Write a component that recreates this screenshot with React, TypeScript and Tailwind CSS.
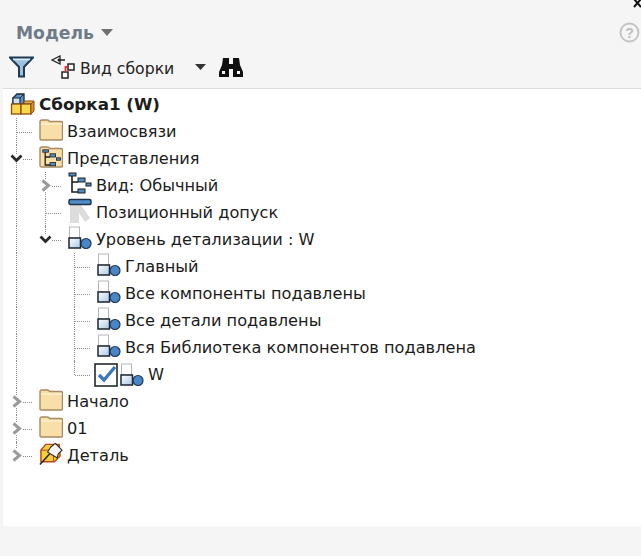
import React from 'react';

const Folder = () => (
  <svg width="24" height="23" viewBox="0 0 24 23" className="shrink-0">
    <path d="M1 4 Q1 2 3 2 H8 Q10 2 10.5 3.5 H22 Q23.5 3.5 23.5 5 V20.5 Q23.5 22 22 22 H2.5 Q1 22 1 20.5 Z" fill="#f8dfa8" stroke="#a78a62" strokeWidth="1.4" />
    <path d="M2 6 H23" stroke="#fff0cc" strokeWidth="1.5" />
  </svg>
);

const TreeGlyph = () => (
  <>
    <path d="M4 4 V20 H10 M4 10 H10" fill="none" stroke="#1c1c1c" strokeWidth="1.6" />
    <rect x="1" y="1" width="7" height="3" fill="#4f8fc9" stroke="#1c1c1c" strokeWidth="1" />
    <rect x="10" y="6" width="7" height="4" fill="#4f8fc9" stroke="#1c1c1c" strokeWidth="1" />
    <rect x="10" y="17" width="7" height="4" fill="#4f8fc9" stroke="#1c1c1c" strokeWidth="1" />
    <rect x="18" y="11" width="5" height="3" fill="#4f8fc9" stroke="#1c1c1c" strokeWidth="1" />
  </>
);

const ViewsFolder = () => (
  <svg width="24" height="23" viewBox="0 0 24 23" className="shrink-0">
    <path d="M1 4 Q1 2 3 2 H8 Q10 2 10.5 3.5 H22 Q23.5 3.5 23.5 5 V20.5 Q23.5 22 22 22 H2.5 Q1 22 1 20.5 Z" fill="#f8dfa8" stroke="#a78a62" strokeWidth="1.4" />
    <g transform="translate(3 4) scale(0.8)"><TreeGlyph /></g>
  </svg>
);

const ViewIcon = () => (
  <svg width="24" height="23" viewBox="0 0 24 23" className="shrink-0">
    <TreeGlyph />
  </svg>
);

const ToleranceIcon = () => (
  <svg width="24" height="25" viewBox="0 0 24 25" className="shrink-0">
    <path d="M2 7 H13 L22 20 L17 24 L11 15 V25 H2 Z" fill="#dcdcdc" />
    <rect x="1" y="1.5" width="22" height="5" rx="1.5" fill="#4f8fc9" stroke="#1f3348" strokeWidth="1.5" />
  </svg>
);

const LodIcon = () => (
  <svg width="24" height="23" viewBox="0 0 24 23" className="shrink-0">
    <rect x="1.5" y="1" width="10" height="11" fill="#fff" stroke="#b5b5b5" strokeWidth="1" />
    <defs>
      <linearGradient id="lodFill" x1="0" y1="0" x2="1" y2="1">
        <stop offset="0" stopColor="#ffffff" />
        <stop offset="1" stopColor="#a9c6e6" />
      </linearGradient>
    </defs>
    <rect x="1" y="12" width="11.5" height="10" fill="url(#lodFill)" stroke="#1c2530" strokeWidth="1.5" />
    <circle cx="18" cy="17.5" r="5" fill="#4a86c5" stroke="#1f3a58" strokeWidth="1.2" />
  </svg>
);

const AssemblyIcon = () => (
  <svg width="25" height="24" viewBox="0 0 25 24" className="shrink-0">
    <path d="M3 6 L7 2 H14 V12 H3 Z" fill="#5b93cf" stroke="#1f2a38" strokeWidth="1.3" />
    <path d="M10 6 L14 2" fill="none" stroke="#1f2a38" strokeWidth="1" />
    <path d="M3 6 H10 V12 H3 Z" fill="#cfe0f2" stroke="#1f2a38" strokeWidth="1.2" />
    <path d="M14 9 H24 L21 12 H14 Z" fill="#e8a850" stroke="#8a4b16" strokeWidth="1" />
    <rect x="1.5" y="12" width="9.5" height="10" fill="#f9d84a" stroke="#8a4b16" strokeWidth="1.3" />
    <rect x="11" y="12" width="10" height="10" fill="#f9d84a" stroke="#8a4b16" strokeWidth="1.3" />
    <path d="M21 12 L24 9 V19 L21 22 Z" fill="#d9962f" stroke="#8a4b16" strokeWidth="1" />
  </svg>
);

const PartIcon = () => (
  <svg width="24" height="24" viewBox="0 0 25 24" className="shrink-0">
    <path d="M2 8 L7 2 H21 L22 14 L16 20 H2 Z" fill="#f6cf3c" stroke="#b4471b" strokeWidth="1.5" />
    <path d="M2 8 H15 L21 3 M15 8 V20" fill="none" stroke="#b4471b" strokeWidth="1" />
    <path d="M12 5 L17 1 L24 8 L20 12 L19 16 L9 10 Z" fill="#f4f4f4" stroke="#222" strokeWidth="1.1" />
    <path d="M11 12 L1 23" stroke="#222" strokeWidth="1.5" />
  </svg>
);

const CheckBox = () => (
  <svg width="24" height="24" viewBox="0 0 24 24" className="shrink-0">
    <rect x="1" y="1" width="22" height="22" fill="#fff" stroke="#23272c" strokeWidth="1.6" />
    <path d="M5 12 L10 17 L21 4" fill="none" stroke="#3b78c0" strokeWidth="3.4" />
  </svg>
);

const Expanded = () => (
  <svg width="13" height="9" viewBox="0 0 13 9" className="bg-white">
    <path d="M1.5 1.5 L6.5 6.5 L11.5 1.5" fill="none" stroke="#2a2a2a" strokeWidth="2.8" />
  </svg>
);

const Collapsed = () => (
  <svg width="10" height="13" viewBox="0 0 10 13" className="bg-white">
    <path d="M1.5 1.5 L7.5 6.5 L1.5 11.5" fill="none" stroke="#9a9a9a" strokeWidth="3" />
  </svg>
);

// passing guide of an ancestor level
const Guide = ({ on }: { on: boolean }) => (
  <div className="w-[29px] h-full shrink-0 pl-[13px]">
    {on && <div className="h-full border-l border-dotted border-[#8c8c8c]" />}
  </div>
);

// elbow with optional expander
const Elbow = ({ last, exp }: { last?: boolean; exp?: 'open' | 'closed' }) => (
  <div className="relative w-[36px] h-full shrink-0">
    <div className={`absolute left-[13px] top-0 border-l border-dotted border-[#8c8c8c] ${last ? 'h-1/2' : 'h-full'}`} />
    <div className="absolute left-[14px] right-[7px] top-1/2 border-t border-dotted border-[#8c8c8c]" />
    {exp === 'open' && <div className="absolute left-[7px] top-[9px] flex"><Expanded /></div>}
    {exp === 'closed' && <div className="absolute left-[9px] top-[7px] flex"><Collapsed /></div>}
  </div>
);

type RowProps = {
  guides?: boolean[];
  last?: boolean;
  exp?: 'open' | 'closed';
  children: React.ReactNode;
  label: string;
};

const Row = ({ guides = [], last, exp, children, label }: RowProps) => (
  <div className="flex items-center h-[27px]">
    {guides.map((g, i) => <Guide key={i} on={g} />)}
    <Elbow last={last} exp={exp} />
    <div className="flex shrink-0 items-center mb-[4px]">{children}</div>
    <span className="ml-[4px] mt-[1px] whitespace-nowrap">{label}</span>
  </div>
);

export default function App() {
  return (
    <div className="relative w-[641px] h-[556px] overflow-hidden bg-[#f5f5f5] text-[16.2px] text-[#1c1c1c] [font-family:'DejaVu_Sans',sans-serif]">
      <svg width="8" height="8" viewBox="0 0 8 8" className="absolute right-0 top-0">
        <path d="M1 -1 L8 7 M8 -1 L1 7" fill="none" stroke="#111" strokeWidth="2" />
      </svg>

      <div className="flex items-center h-[31px] mt-[17px] pl-[16px] pr-[1px]">
        <span className="mt-[2px] text-[17.2px] font-bold text-[#6f7b88]">Модель</span>
        <svg width="12" height="7" viewBox="0 0 12 7" className="ml-[7px]"><path d="M0 0 H12 L6 7 Z" fill="#707070" /></svg>
        <svg width="21" height="21" viewBox="0 0 21 21" className="ml-auto">
          <circle cx="10.5" cy="10.5" r="9" fill="none" stroke="#c4c4c4" strokeWidth="2" />
          <text x="10.5" y="15.5" textAnchor="middle" fontSize="14" fontWeight="700" fill="#bdbdbd" fontFamily="'Liberation Sans', sans-serif">?</text>
        </svg>
      </div>

      <div className="flex items-center h-[30px] mt-[4px] pl-[9px] text-[#222]">
        <svg width="25" height="22" viewBox="0 0 25 22">
          <path d="M1 1.5 H24 L15 11 V20.5 H10 V11 Z" fill="#9cc2e0" stroke="#1f3a52" strokeWidth="2" />
          <path d="M4 3.5 H21" stroke="#dcecf8" strokeWidth="1.5" />
        </svg>
        <svg width="25" height="24" viewBox="0 0 25 24" className="ml-[17px]">
          <path d="M1 5 L9 1 V9 Z M9 5 H14" fill="none" stroke="#222" strokeWidth="1.3" />
          <circle cx="8" cy="5" r="1.5" fill="#222" />
          <rect x="17" y="9" width="6" height="6" fill="#fff" stroke="#222" strokeWidth="1.5" />
          <rect x="11" y="17" width="6" height="6" fill="#fff" stroke="#222" strokeWidth="1.5" />
          <path d="M17 12 H14.5 V17" fill="none" stroke="#e2303a" strokeWidth="1.8" />
        </svg>
        <span className="ml-[4px] mt-[3px] w-[115px] whitespace-nowrap text-[15.7px]">Вид сборки</span>
        <svg width="11" height="6" viewBox="0 0 11 6"><path d="M0 0 H11 L5.5 6 Z" fill="#333" /></svg>
        <svg width="24" height="21" viewBox="0 0 24 21" className="ml-[13px]">
          <path d="M4 1 H10 V7 H14 V1 H20 L21 8 L24 15 V20 H14 V12 H10 V20 H0 V15 L3 8 Z" fill="#111" />
          <rect x="3" y="14" width="3" height="3" fill="#fff" />
          <rect x="18" y="14" width="3" height="3" fill="#fff" />
        </svg>
      </div>

      <div className="ml-[3px] mt-[6px] h-[438px] bg-white border-t border-[#dcdcdc] pt-[2px]">
        <div className="flex items-center h-[27px] pl-[7px] font-bold">
          <div className="flex mb-[2px]"><AssemblyIcon /></div>
          <span className="ml-[4px] mt-[1px] whitespace-nowrap text-[16.7px]">Сборка1 (W)</span>
        </div>
        <Row label="Взаимосвязи"><Folder /></Row>
        <Row label="Представления" exp="open"><ViewsFolder /></Row>
        <Row label="Вид: Обычный" guides={[true]} exp="closed"><ViewIcon /></Row>
        <Row label="Позиционный допуск" guides={[true]}><ToleranceIcon /></Row>
        <Row label="Уровень детализации : W" guides={[true]} last exp="open"><LodIcon /></Row>
        <Row label="Главный" guides={[true, false]}><LodIcon /></Row>
        <Row label="Все компоненты подавлены" guides={[true, false]}><LodIcon /></Row>
        <Row label="Все детали подавлены" guides={[true, false]}><LodIcon /></Row>
        <Row label="Вся Библиотека компонентов подавлена" guides={[true, false]}><LodIcon /></Row>
        <Row label="W" guides={[true, false]} last>
          <div className="-ml-[3px] mt-[4px] flex"><CheckBox /></div>
          <div className="ml-[2px] mt-[3px] flex"><LodIcon /></div>
        </Row>
        <Row label="Начало" exp="closed"><Folder /></Row>
        <Row label="01" exp="closed"><Folder /></Row>
        <Row label="Деталь" last exp="closed"><PartIcon /></Row>
      </div>
    </div>
  );
}
